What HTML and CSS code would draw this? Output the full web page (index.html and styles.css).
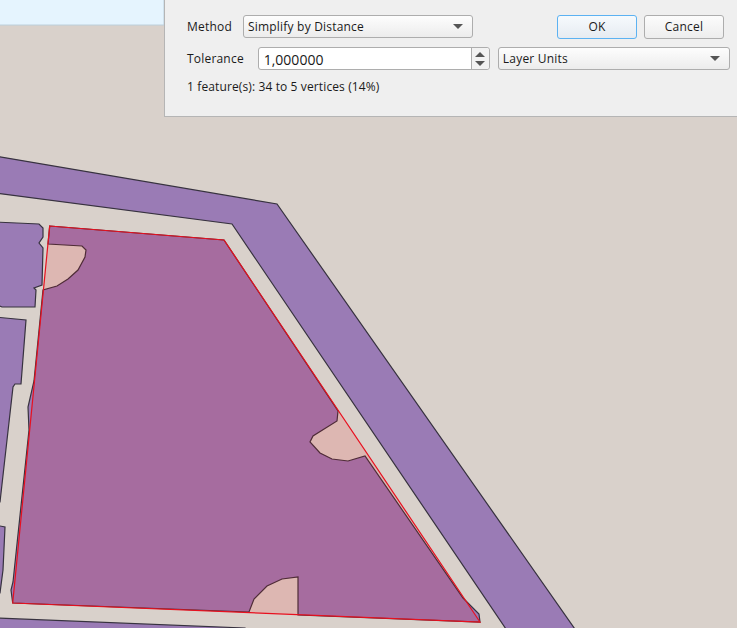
FILE: index.html
```html
<!DOCTYPE html>
<html lang="en">
<head>
    <meta charset="UTF-8">
    <meta name="viewport" content="width=device-width, initial-scale=1.0">
    <title>Simplify</title>
    <link rel="stylesheet" href="styles.css">
</head>
<body>
    <!-- map canvas -->
    <svg class="map" width="737" height="628" viewBox="0 0 737 628">
        <rect class="sky" x="-2" y="-2" width="166" height="27"/>
        <polygon class="parcel" points="-5,156 277,204 577,632 508,632 232,224 -5,193"/>
        <polygon class="parcel" points="-5,222 39,224 43,228 43,237 39,243 43,248 42,285 34,288 36,290 35,307 2,307 -5,304"/>
        <polygon class="parcel" points="-5,317 26,320 21,384 15,384 13,387 7,440 0,502 -5,502"/>
        <polygon class="parcel" points="-5,525 5,527 3,570 0,593 -5,593"/>
        <polygon class="parcel" points="-5,618 245,628 245,635 -5,635"/>
        <!-- original feature, with notches -->
        <polygon class="parcel" points="49.7,226 224,240 338,411 337,421 313,436 310,442 320,453 332,459 348,461 365,456 463,598 479,614 480,622 298,615 298,577 282,579 267,586 254,599 249,612 12.7,603 11,590 13,582 29,430 28,407 34,381 43,290 57,286 68,279 78,270 85,257 86,250 82,246 48,244"/>
        <!-- simplified result -->
        <polygon class="preview" points="49.7,226 224,240 480,622 12.7,603"/>
    </svg>

    <div class="dialog">
        <div class="row">
            <span class="label label-method">Method</span>
            <div class="combo combo-method">
                <span>Simplify by Distance</span>
                <i class="arrow"></i>
            </div>
            <div class="buttons">
                <button class="btn btn-default">OK</button>
                <button class="btn">Cancel</button>
            </div>
        </div>
        <div class="row row-tolerance">
            <span class="label label-tolerance">Tolerance</span>
            <div class="spinbox">
                <span class="value">1,000000</span>
                <div class="spin">
                    <i class="spin-up"></i>
                    <i class="spin-down"></i>
                </div>
            </div>
            <div class="combo combo-units">
                <span>Layer Units</span>
                <i class="arrow"></i>
            </div>
        </div>
        <p class="status">1 feature(s): 34 to 5 vertices (14%)</p>
    </div>
</body>
</html>
```

FILE: styles.css
```css
body {
    margin: 0;
    width: 737px;
    height: 628px;
    overflow: hidden;
    position: relative;
    background-color: #d9d1cb;
    font-family: "Open Sans", "Liberation Sans", sans-serif;
    font-size: 12px;
    letter-spacing: 0.2px;
    color: #1a1a1a;
}
.map {
    position: absolute;
    left: 0;
    top: 0;
}
.sky {
    fill: #e5f4fe;
    stroke: #bcd0dc;
    stroke-width: 1;
}
.parcel {
    fill: #9a7bb5;
    stroke: #37323f;
    stroke-width: 1.2;
}
.preview {
    fill: rgba(255, 0, 0, 0.12);
    stroke: #e8101f;
    stroke-width: 1.2;
}
.dialog {
    position: absolute;
    left: 164px;
    top: -1px;
    width: 580px;
    height: 118px;
    box-sizing: border-box;
    padding: 15px 0 0 22px;
    background: #efefef;
    border: 1px solid #b5b5b5;
}
.row {
    display: flex;
    align-items: flex-start;
    width: 543px;
}
.row-tolerance {
    margin-top: 8px;
}
.label {
    line-height: 24px;
}
.label-method {
    width: 56px;
}
.label-tolerance {
    width: 71px;
}
.combo {
    display: flex;
    align-items: center;
    justify-content: space-between;
    box-sizing: border-box;
    height: 23px;
    padding: 0 9px 0 4px;
    background: linear-gradient(#fdfdfd, #ececec);
    border: 1px solid #adadad;
    border-radius: 3px;
}
.combo-method {
    width: 230px;
}
.combo-units {
    width: 233px;
    margin-left: 8px;
}
.arrow {
    border-left: 5px solid transparent;
    border-right: 5px solid transparent;
    border-top: 5px solid #555;
}
.buttons {
    display: flex;
    gap: 7px;
    margin-left: 84px;
}
.btn {
    box-sizing: border-box;
    width: 80px;
    height: 24px;
    padding: 0 0 2px;
    font: inherit;
    letter-spacing: inherit;
    color: inherit;
    background: linear-gradient(#fcfcfc, #ededed);
    border: 1px solid #adadad;
    border-radius: 3px;
}
.btn-default {
    background: linear-gradient(#f6fafd, #e6ebf1);
    border-color: #5cb2f2;
}
.spinbox {
    display: flex;
    box-sizing: border-box;
    width: 233px;
    height: 23px;
    background: #fff;
    border: 1px solid #adadad;
    border-radius: 3px;
}
.value {
    flex: 1;
    padding-left: 5px;
    font-size: 14px;
    letter-spacing: 0;
    line-height: 23px;
}
.spin {
    width: 17px;
    display: flex;
    flex-direction: column;
    align-items: center;
    justify-content: center;
    gap: 4px;
    background: #f2f2f2;
    border-left: 1px solid #adadad;
    border-radius: 0 3px 3px 0;
}
.spin-up, .spin-down {
    border-left: 5px solid transparent;
    border-right: 5px solid transparent;
}
.spin-up {
    border-bottom: 5px solid #555;
}
.spin-down {
    border-top: 5px solid #555;
}
.status {
    margin: 8px 0 0;
    line-height: 16px;
    letter-spacing: 0.12px;
}
```
